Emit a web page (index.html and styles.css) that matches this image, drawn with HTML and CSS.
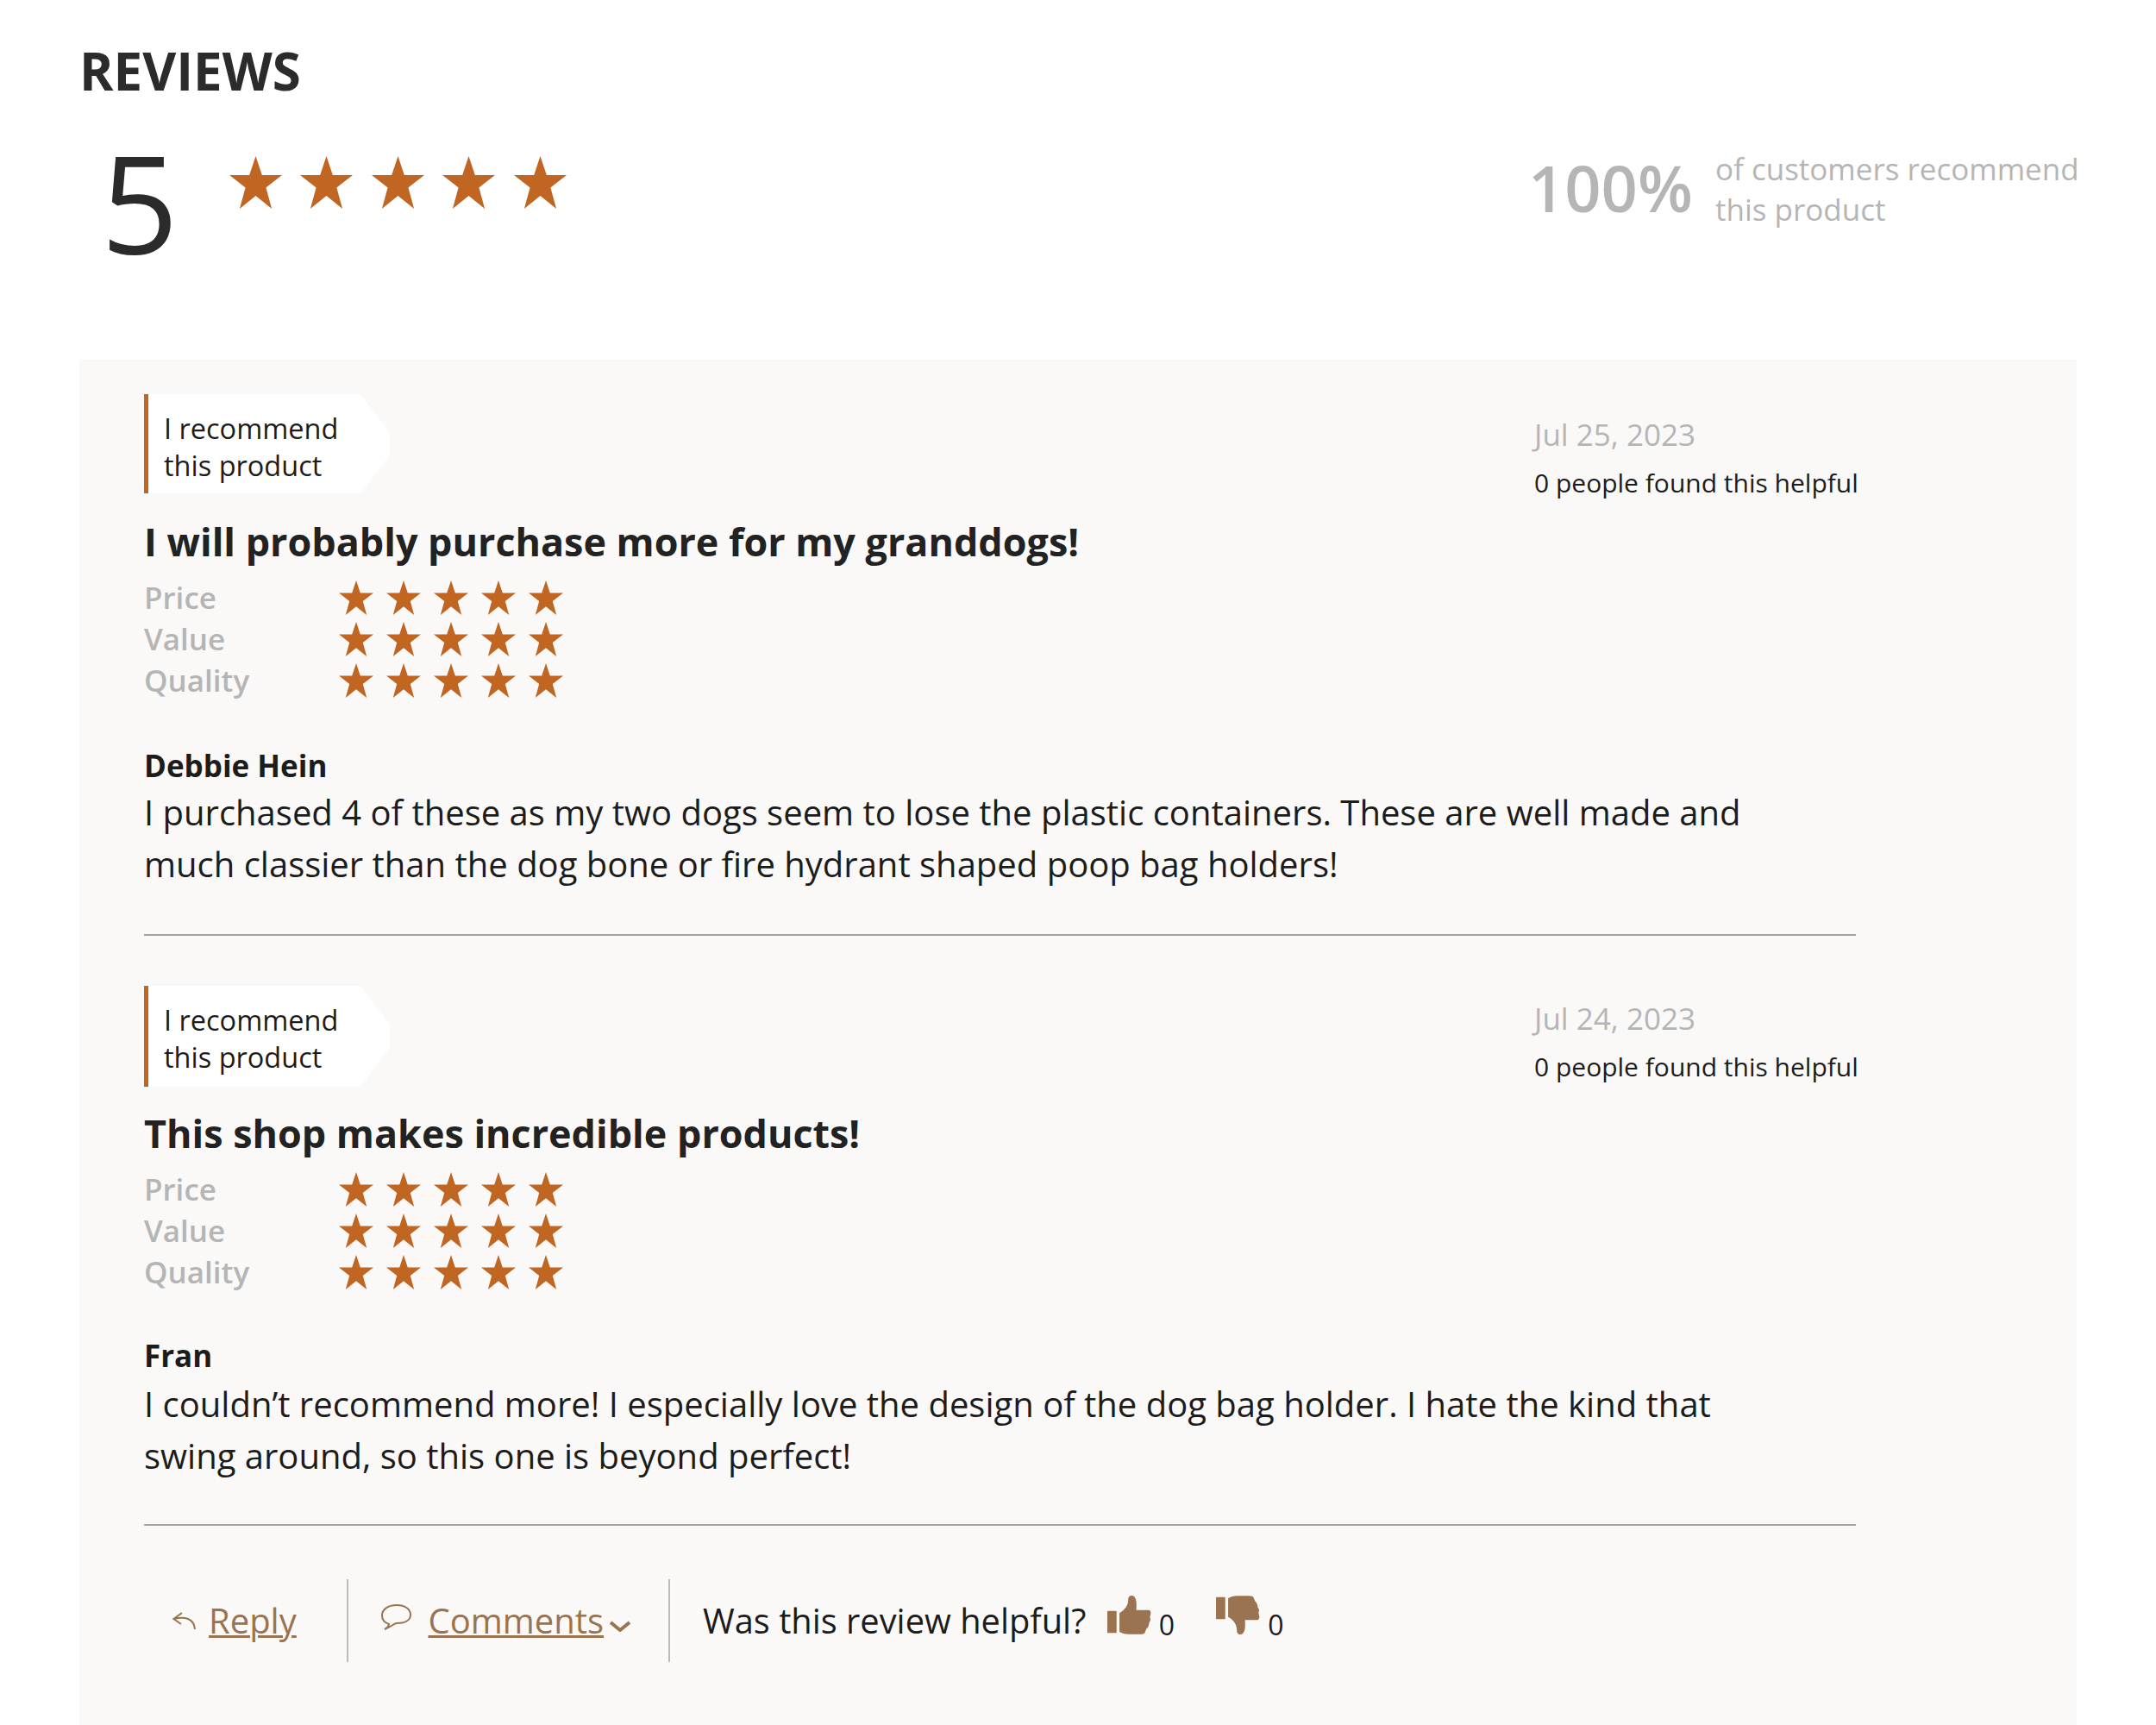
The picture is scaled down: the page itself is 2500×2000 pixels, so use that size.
FILE: index.html
```html
<!DOCTYPE html>
<html lang="en">
<head>
<meta charset="utf-8">
<title>Reviews</title>
<link rel="stylesheet" href="styles.css">
</head>
<body>
<svg class="defs" width="0" height="0" aria-hidden="true">
  <symbol id="star" viewBox="0 0 100 100"><polygon points="50,0 62,36 100,36 69.5,60 80.5,100 50,75.5 19.5,100 30.5,60 0,36 38,36"/></symbol>
  <symbol id="thumb" viewBox="0 0 152 134"><rect x="0" y="53" width="32" height="76" rx="2"/><path d="M42 60C60 50 72 35 72 15C72 3 78 0 85 0C98 0 103 20 100 50L145 50Q152 55 150 62L147 75Q152 85 145 92L143 103Q140 112 135 115L130 127Q128 133 115 133L70 133Q55 133 42 125Z"/></symbol>
</svg>
<main class="page">
  <h1 class="title">REVIEWS</h1>
  <section class="summary">
    <div class="score">
      <span class="score-num">5</span>
      <div class="stars-lg">
        <svg><use href="#star"/></svg><svg><use href="#star"/></svg><svg><use href="#star"/></svg><svg><use href="#star"/></svg><svg><use href="#star"/></svg>
      </div>
    </div>
    <div class="recommend">
      <span class="pct">100%</span>
      <p class="pct-text">of customers recommend<br>this product</p>
    </div>
  </section>
  <section class="panel">
    <article class="review">
      <div class="review-top">
        <div class="badge">I recommend<br>this product</div>
        <div class="meta">
          <div class="date">Jul 25, 2023</div>
          <div class="helpful">0 people found this helpful</div>
        </div>
      </div>
      <h2 class="review-title">I will probably purchase more for my granddogs!</h2>
      <div class="ratings">
        <span class="rating-label">Price</span>
        <div class="stars-sm"><svg><use href="#star"/></svg><svg><use href="#star"/></svg><svg><use href="#star"/></svg><svg><use href="#star"/></svg><svg><use href="#star"/></svg></div>
        <span class="rating-label">Value</span>
        <div class="stars-sm"><svg><use href="#star"/></svg><svg><use href="#star"/></svg><svg><use href="#star"/></svg><svg><use href="#star"/></svg><svg><use href="#star"/></svg></div>
        <span class="rating-label">Quality</span>
        <div class="stars-sm"><svg><use href="#star"/></svg><svg><use href="#star"/></svg><svg><use href="#star"/></svg><svg><use href="#star"/></svg><svg><use href="#star"/></svg></div>
      </div>
      <div class="author">Debbie Hein</div>
      <p class="body">I purchased 4 of these as my two dogs seem to lose the plastic containers. These are well made and<br>much classier than the dog bone or fire hydrant shaped poop bag holders!</p>
    </article>
    <article class="review review-second">
      <div class="review-top">
        <div class="badge">I recommend<br>this product</div>
        <div class="meta">
          <div class="date">Jul 24, 2023</div>
          <div class="helpful">0 people found this helpful</div>
        </div>
      </div>
      <h2 class="review-title">This shop makes incredible products!</h2>
      <div class="ratings">
        <span class="rating-label">Price</span>
        <div class="stars-sm"><svg><use href="#star"/></svg><svg><use href="#star"/></svg><svg><use href="#star"/></svg><svg><use href="#star"/></svg><svg><use href="#star"/></svg></div>
        <span class="rating-label">Value</span>
        <div class="stars-sm"><svg><use href="#star"/></svg><svg><use href="#star"/></svg><svg><use href="#star"/></svg><svg><use href="#star"/></svg><svg><use href="#star"/></svg></div>
        <span class="rating-label">Quality</span>
        <div class="stars-sm"><svg><use href="#star"/></svg><svg><use href="#star"/></svg><svg><use href="#star"/></svg><svg><use href="#star"/></svg><svg><use href="#star"/></svg></div>
      </div>
      <div class="author">Fran</div>
      <p class="body">I couldn’t recommend more! I especially love the design of the dog bag holder. I hate the kind that<br>swing around, so this one is beyond perfect!</p>
    </article>
    <footer class="actions">
      <div class="action action-reply">
        <svg class="ico-reply" viewBox="0 0 27 20"><path d="M11 1L1.500 8L10 14M1.500 8C14 5 25 7 26 20"/></svg>
        <a class="link" href="#">Reply</a>
      </div>
      <div class="action action-comments">
        <svg class="ico-comment" viewBox="0 0 35 30"><path d="M9 23C3 21 1 17 1 13C1 6 8 1 18 1C28 1 34 6 34 12C34 19 27 22 18 22C15 22 12 26 4 29C7 27 9 26 9 23Z"/></svg>
        <a class="link" href="#">Comments</a>
        <svg class="ico-chev" viewBox="0 0 24 13"><path d="M1 2L12 11L23 2"/></svg>
      </div>
      <div class="action action-helpful">
        <span class="helpful-q">Was this review helpful?</span>
        <svg class="thumb"><use href="#thumb"/></svg><span class="count">0</span>
        <svg class="thumb thumb-down"><use href="#thumb"/></svg><span class="count">0</span>
      </div>
    </footer>
  </section>
</main>
</body>
</html>
```
FILE: styles.css
```css
* { box-sizing: border-box; }
html, body { margin: 0; padding: 0; background: #fff; }
body { font-family: "Open Sans", "Liberation Sans", sans-serif; color: #1c1c1c; }
.defs { position: absolute; }
.page { width: 2500px; height: 2000px; padding: 0 92px; overflow: hidden; }
.title { margin: 0; padding: 46px 0 0; font-size: 60px; line-height: 72px; font-weight: 700; color: #2b2b2b; }
.summary { display: flex; justify-content: space-between; height: 299px; }
.score { display: flex; padding-left: 25px; }
.score-num { font-size: 157px; font-weight: 400; line-height: 214px; padding-top: 8px; color: #2b2b2b; }
.stars-lg { display: flex; gap: 21.500px; padding: 63px 0 0 59px; fill: #c06522; }
.stars-lg svg { width: 61px; height: 61px; }
.recommend { display: flex; width: 723px; padding: 50px 0 0 0; margin-right: -87px; align-items: flex-start; }
.pct { font-size: 74px; font-weight: 600; line-height: 100px; color: #b5b5b5; width: 217px; }
.pct-text { margin: 4px 0 0; font-size: 35px; line-height: 47px; color: #b5b5b5; }
.panel { background: #faf9f7; height: 1583px; padding: 40px 0 0 75px; }
.review { width: 1985px; border-bottom: 2px solid #a3a3a3; height: 628px; margin-bottom: 58px; }
.review-second { height: 626px; margin-bottom: 62px; }
.review-top { display: flex; justify-content: space-between; height: 121px; }
.badge { width: 285px; height: 115px; border-left: 5px solid #c06522; background: #fff; clip-path: polygon(0 0, 251px 0, 285px 45px, 285px 71px, 251px 100%, 0 100%); padding: 18px 0 0 18px; font-size: 32.500px; line-height: 43px; }
.review-second .badge { height: 117px; }
.meta { width: 374px; margin-right: -1px; }
.review-second .meta { margin-top: -9px; }
.date { padding-top: 23px; font-size: 35px; line-height: 48px; color: #b5b5b5; }
.helpful { padding-top: 12px; font-size: 30px; line-height: 40px; white-space: nowrap; }
.review-title { margin: 20px 0 0; font-size: 44.900px; line-height: 60px; font-weight: 700; color: #222; }
.ratings { display: grid; grid-template-columns: 226px 1fr; grid-auto-rows: 48px; margin-top: 11px; align-items: center; }
.rating-label { font-size: 35px; font-weight: 600; color: #b5b5b5; line-height: 48px; }
.stars-sm { display: flex; gap: 15px; fill: #c06522; }
.stars-sm svg { width: 40px; height: 40px; }
.author { margin-top: 51px; font-size: 35px; line-height: 48px; font-weight: 700; }
.review-second .author { margin-top: 49px; }
.body { margin: 0; font-size: 40px; line-height: 60px; }
.review-second .body { margin-top: 2px; }
.actions { display: flex; align-items: center; height: 96px; margin: 0 0 0 1px; }
.action { display: flex; align-items: center; height: 96px; }
.action-reply { width: 236px; padding-left: 32px; border-right: 2px solid #bbb; }
.action-comments { width: 373px; padding-left: 38px; border-right: 2px solid #bbb; }
.action-helpful { padding-left: 38px; }
.link { font-size: 40px; color: #9a7350; text-decoration: underline; text-decoration-thickness: 3px; margin-top: -2px; }
.ico-reply { width: 27px; height: 20px; fill: none; stroke: #9a7350; stroke-width: 2; margin-right: 15px; }
.ico-comment { width: 35px; height: 30px; fill: none; stroke: #9a7350; stroke-width: 2; margin-right: 19.500px; margin-top: -8px; }
.ico-chev { width: 24px; height: 13px; fill: none; stroke: #9a7350; stroke-width: 4; margin-left: 7px; margin-top: 12px; }
.helpful-q { font-size: 39.800px; margin-top: -2px; }
.thumb { width: 51px; height: 45px; fill: #9a7350; margin-left: 24.500px; margin-top: -14px; }
.thumb-down { transform: scaleY(-1); margin-left: 48px; }
.count { font-size: 32px; margin-left: 9px; margin-top: 8px; }
```
